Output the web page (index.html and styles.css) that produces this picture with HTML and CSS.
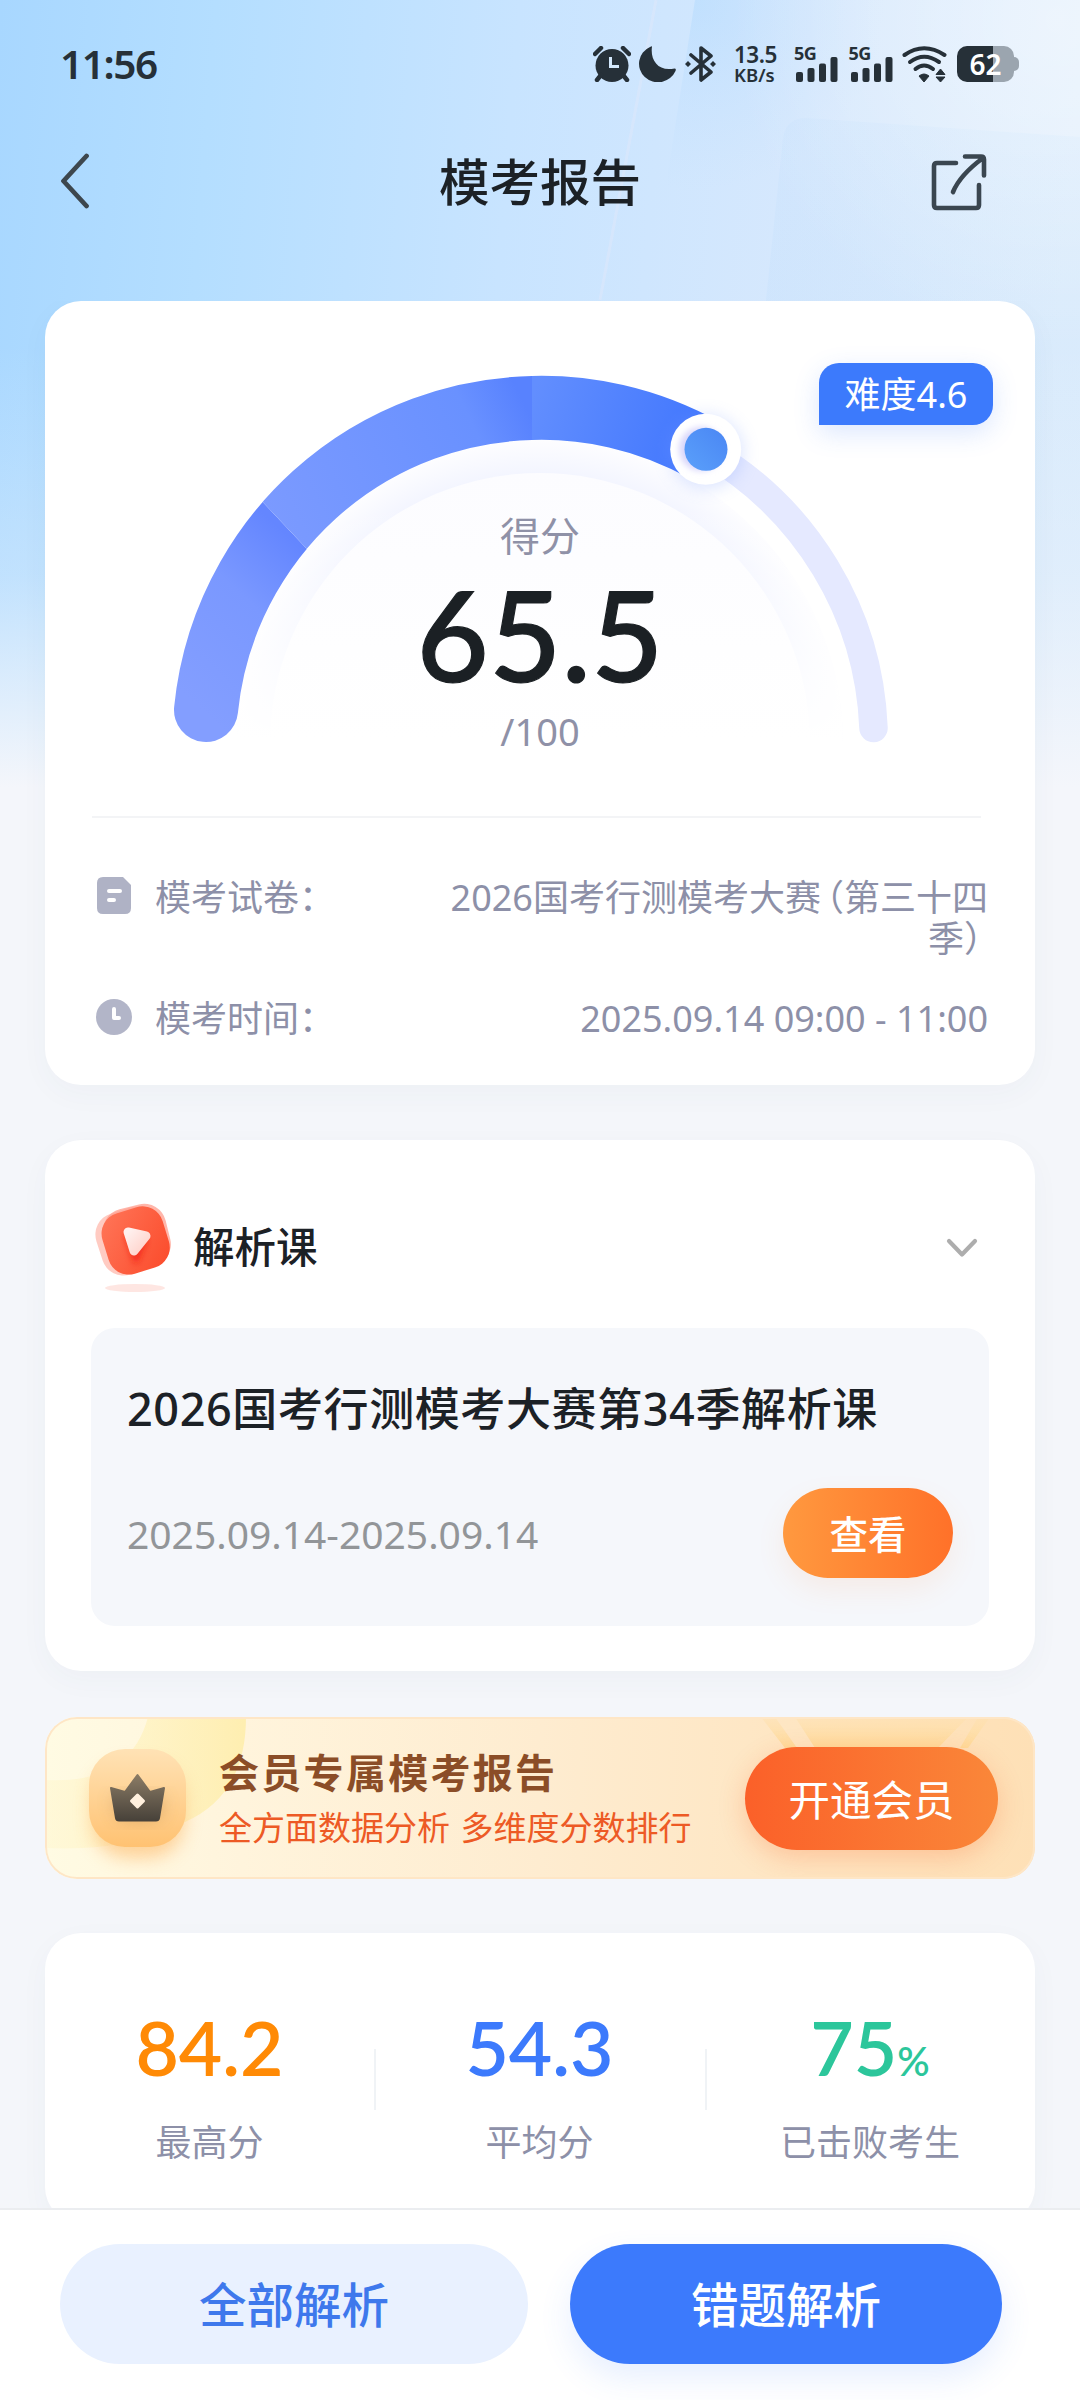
FILE: index.html
```html
<!DOCTYPE html>
<html lang="zh-CN">
<head>
<meta charset="utf-8">
<title>模考报告</title>
<link rel="stylesheet" href="styles.css">
</head>
<body>
<div class="page">
  <svg class="backdrop" viewBox="0 0 1080 820" preserveAspectRatio="none" aria-hidden="true">
    <defs>
      <linearGradient id="sky" x1="0" y1="0" x2="1" y2="0.06">
        <stop offset="0" stop-color="#a8d7ff"/><stop offset=".2" stop-color="#b4deff"/><stop offset=".48" stop-color="#c8e4ff"/><stop offset=".75" stop-color="#d6e8fd"/><stop offset="1" stop-color="#e2effc"/>
      </linearGradient>
      <linearGradient id="fade" x1="0" y1="0" x2="0" y2="1">
        <stop offset=".42" stop-color="#f4f6fb" stop-opacity="0"/><stop offset=".7" stop-color="#f4f6fb" stop-opacity=".3"/><stop offset=".96" stop-color="#f4f6fb"/>
      </linearGradient>
      <linearGradient id="panel" x1="0" y1="0" x2="0" y2="1">
        <stop offset="0" stop-color="#b8dafb" stop-opacity=".25"/><stop offset="1" stop-color="#b4dbfb" stop-opacity=".5"/>
      </linearGradient>
      <radialGradient id="glow" cx="1060" cy="20" r="330" gradientUnits="userSpaceOnUse">
        <stop offset="0" stop-color="#fff" stop-opacity=".4"/><stop offset="1" stop-color="#fff" stop-opacity="0"/>
      </radialGradient>
      <radialGradient id="beam" cx="695" cy="0" r="190" gradientUnits="userSpaceOnUse">
        <stop offset="0" stop-color="#a9d6ff" stop-opacity=".4"/><stop offset="1" stop-color="#b9dcff" stop-opacity="0"/>
      </radialGradient>
    </defs>
    <rect width="1080" height="820" fill="url(#sky)"/>
    <path d="M695 0H900V300H648Z" fill="url(#beam)"/>
    <path d="M656 0L600 300" stroke="#e4e8fb" stroke-opacity=".4" stroke-width="3"/>
    <path d="M766 300L783 138Q786 118 806 118L1080 137V820H766Z" fill="url(#panel)" opacity=".6"/>
    <rect width="1080" height="400" fill="url(#glow)"/>
    <rect width="1080" height="820" fill="url(#fade)"/>
  </svg>

  <header class="status">
    <span class="clock">11:56</span>
    <div class="indicators">
      <svg width="38" height="36" viewBox="0 0 38 36"><circle cx="19" cy="19.500" r="16.500" fill="#263038"/><path d="M2 8L8 2M36 8L30 2M8 29L4 34M30 29L34 34" stroke="#263038" stroke-width="4.500" stroke-linecap="round"/><path d="M17.500 11V20.500H26" fill="none" stroke="#d3e8fc" stroke-width="3"/></svg>
      <svg class="moon" width="37" height="36" viewBox="0 0 37 36"><path d="M13 .5C11 14 19 26 35.500 22.500Q37.500 22.500 36.500 25A19 18.500 0 1 1 11 1Q13 0 13 .5Z" fill="#263038"/></svg>
      <svg class="bt" width="32" height="36" viewBox="0 0 32 36"><path d="M6 9L26 26L16 34V2L26 10L6 27" fill="none" stroke="#263038" stroke-width="3.600" stroke-linejoin="round" stroke-linecap="round"/><path d="M3 15L6 18L3 21L0 18ZM28 15L31 18L28 21L25 18Z" fill="#263038"/></svg>
      <div class="speed"><span>13.5</span><small>KB/s</small></div>
      <div class="signal"><span>5G</span><svg width="42" height="25" viewBox="0 0 42 25" fill="#263038"><rect y="15" width="7" height="10" rx="2"/><rect x="11.500" y="11" width="7" height="14" rx="2"/><rect x="23" y="6.500" width="7" height="18.500" rx="2"/><rect x="34.500" y="0" width="7" height="25" rx="2"/></svg></div>
      <div class="signal"><span>5G</span><svg width="42" height="25" viewBox="0 0 42 25" fill="#263038"><rect y="15" width="7" height="10" rx="2"/><rect x="11.500" y="11" width="7" height="14" rx="2"/><rect x="23" y="6.500" width="7" height="18.500" rx="2"/><rect x="34.500" y="0" width="7" height="25" rx="2"/></svg></div>
      <svg class="wifi" width="45" height="36" viewBox="0 0 45 36"><g fill="none" stroke="#263038" stroke-width="4" stroke-linecap="round"><path d="M2.500 9Q22 -4.500 42.500 9"/><path d="M8 16Q22 5.500 37 16"/><path d="M13.500 23Q22 16 31 23"/></g><path d="M17 30Q22 26 27 30L22 36ZM34 28.500L38.500 23L43 28.500ZM34 31L38.500 36L43 31Z" fill="#263038" stroke="#263038" stroke-linejoin="round"/></svg>
      <div class="battery"><span>62</span></div>
    </div>
  </header>

  <nav class="nav">
    <svg width="30" height="56" viewBox="0 0 30 56"><path d="M26.500 3L3.500 28L26.500 53" fill="none" stroke="#3d474e" stroke-width="4.800" stroke-linecap="round" stroke-linejoin="round"/></svg>
    <h1>模考报告</h1>
    <svg width="56" height="58" viewBox="0 0 56 58"><g fill="none" stroke="#3a4650" stroke-width="4.600" stroke-linecap="round" stroke-linejoin="round"><path d="M25 10H6Q3 10 3 13V52Q3 55 6 55H45Q48 55 48 52V32"/><path d="M34 3.500H50Q53 3.500 53 6.500V22.500M52 5Q29 22 22 39"/></g></svg>
  </nav>

  <main class="content">
    <section class="card score">
      <div class="gauge">
        <svg width="990" height="516" viewBox="45 301 990 516">
          <defs>
            <linearGradient id="seg1" x1="180" y1="690" x2="306" y2="552" gradientUnits="userSpaceOnUse"><stop offset="0" stop-color="#839eff"/><stop offset=".6" stop-color="#7a98ff"/><stop offset="1" stop-color="#6486ff"/></linearGradient>
            <linearGradient id="seg2" x1="280" y1="540" x2="532" y2="420" gradientUnits="userSpaceOnUse"><stop offset="0" stop-color="#7b9aff"/><stop offset=".8" stop-color="#6991ff"/><stop offset="1" stop-color="#5882fe"/></linearGradient>
            <linearGradient id="seg3" x1="532" y1="400" x2="690" y2="450" gradientUnits="userSpaceOnUse"><stop offset="0" stop-color="#628efe"/><stop offset="1" stop-color="#4378fe"/></linearGradient>
            <linearGradient id="knob" x1="0" y1="1" x2="1" y2="0"><stop offset="0" stop-color="#5aa0fa"/><stop offset="1" stop-color="#4a86f4"/></linearGradient>
            <linearGradient id="down" x1="0" y1="470" x2="0" y2="740" gradientUnits="userSpaceOnUse"><stop offset="0" stop-color="#fcfcff"/><stop offset="1" stop-color="#fff"/></linearGradient>
            <radialGradient id="halo" cx="540" cy="743" r="303" gradientUnits="userSpaceOnUse"><stop offset=".885" stop-color="#f3f5ff"/><stop offset="1" stop-color="#fdfdff"/></radialGradient>
            <linearGradient id="veil" x1="0" y1="500" x2="0" y2="740" gradientUnits="userSpaceOnUse"><stop offset="0" stop-color="#fff" stop-opacity="0"/><stop offset="1" stop-color="#fff"/></linearGradient>
            <clipPath id="c1"><path d="M45 301L262.700 502L306 548L540 743H45Z"/></clipPath>
            <clipPath id="c2"><path d="M45 301H532V743H540L306 548L262.700 502Z"/></clipPath>
            <clipPath id="c3"><path d="M532 301H1035V743H532Z"/></clipPath>
            <filter id="soft" x="-50%" y="-50%" width="200%" height="200%"><feGaussianBlur stdDeviation="9"/></filter>
            <filter id="tiny" x="-50%" y="-50%" width="200%" height="200%"><feGaussianBlur stdDeviation="3"/></filter>
          </defs>
          <path d="M237 743A303 303 0 0 1 843 743Z" fill="url(#halo)"/>
          <path d="M237 743A303 303 0 0 1 843 743Z" fill="url(#veil)"/>
          <path d="M270 743A270 270 0 0 1 810 743Z" fill="url(#down)"/>
          <path d="M706 451A335 335 0 0 1 873.500 728" fill="none" stroke="#e5e9ff" stroke-width="28.500" stroke-linecap="round"/>
          <g fill="none" stroke-width="64">
            <path clip-path="url(#c1)" d="M206 710A335 335 0 0 1 340 474" stroke="url(#seg1)" stroke-linecap="round"/>
            <path clip-path="url(#c2)" d="M206 710A335 335 0 0 1 540 408" stroke="url(#seg2)"/>
            <path clip-path="url(#c3)" d="M520 408.500A335 335 0 0 1 706 451" stroke="url(#seg3)"/>
          </g>
          <circle cx="706" cy="452" r="36" fill="#7c9dff" opacity=".3" filter="url(#soft)"/>
          <circle cx="705.700" cy="449.300" r="35.500" fill="#fff"/>
          <circle cx="701" cy="449" r="22" fill="#d8d6fb" filter="url(#tiny)"/>
          <circle cx="706" cy="449.300" r="21.500" fill="url(#knob)"/>
        </svg>
        <div class="readout"><span class="caption">得分</span><strong>65.5</strong><span class="total">/100</span></div>
        <span class="badge">难度4.6</span>
      </div>
      <dl class="info">
        <div class="row">
          <svg width="36" height="38" viewBox="0 0 36 38"><path d="M7 0H27L35 8V31Q35 37 29 37H7Q1 37 1 31V6Q1 0 7 0Z" fill="#afb2c5"/><path d="M13 14H24M13 23H18" stroke="#fff" stroke-width="4" stroke-linecap="round"/></svg>
          <dt>模考试卷：</dt><dd>2026国考行测模考大赛<span class="open">（</span>第三十四季<span class="close">）</span></dd>
        </div>
        <div class="row">
          <svg width="36" height="38" viewBox="0 0 36 38"><circle cx="18" cy="19" r="18" fill="#b2b5c8"/><path d="M18 11V20H23" fill="none" stroke="#fff" stroke-width="4" stroke-linecap="round" stroke-linejoin="round"/></svg>
          <dt>模考时间：</dt><dd>2025.09.14 09:00 - 11:00</dd>
        </div>
      </dl>
    </section>

    <section class="card lesson">
      <div class="lesson-head">
        <svg width="78" height="92" viewBox="94 1202 78 92">
          <defs><linearGradient id="red" x1="0" y1="0" x2="1" y2="1"><stop offset="0" stop-color="#ff7659"/><stop offset="1" stop-color="#fb4a2a"/></linearGradient>
          <linearGradient id="tri" x1="0" y1="0" x2="1" y2="1"><stop offset="0" stop-color="#fff0ee"/><stop offset="1" stop-color="#ffd2ca"/></linearGradient>
          <filter id="b2" x="-50%" y="-50%" width="200%" height="200%"><feGaussianBlur stdDeviation="3"/></filter></defs>
          <ellipse cx="135" cy="1288" rx="30" ry="4" fill="#fdd9d2" opacity=".65"/>
          <rect x="98" y="1209" width="64" height="64" rx="22" fill="#ffb9ae" opacity=".75" transform="rotate(-18 130 1241)"/>
          <rect x="105" y="1206" width="64" height="63" rx="22" fill="#ff9d8d" opacity=".75" transform="rotate(-14 137 1238)"/>
          <rect x="104" y="1209" width="63" height="63" rx="21" fill="url(#red)" transform="rotate(-17 135.500 1240)"/>
          <path d="M128 1236L144 1240L136 1260Z" fill="#f01810" opacity=".65" stroke="#f01810" stroke-width="6" stroke-linejoin="round" filter="url(#b2)"/>
          <path d="M128 1232L146 1236L134 1251Z" fill="url(#tri)" stroke="url(#tri)" stroke-width="9" stroke-linejoin="round"/>
        </svg>
        <h2>解析课</h2>
        <svg class="chevron" width="34" height="22" viewBox="0 0 34 22"><path d="M4 4L17 17.500L30 4" fill="none" stroke="#adadad" stroke-width="4.200" stroke-linecap="round" stroke-linejoin="round"/></svg>
      </div>
      <div class="lesson-box">
        <h3>2026国考行测模考大赛第34季解析课</h3>
        <div class="lesson-foot"><time>2025.09.14-2025.09.14</time><button class="view">查看</button></div>
      </div>
    </section>

    <section class="vip">
      <svg class="vip-art" width="990" height="163" viewBox="45 1717 990 163" aria-hidden="true">
        <defs>
          <linearGradient id="cream" x1="0" y1="0" x2="1" y2="0"><stop offset="0" stop-color="#fffbe3"/><stop offset=".2" stop-color="#fff4dc"/><stop offset=".5" stop-color="#feecd0"/><stop offset="1" stop-color="#fee0b6"/></linearGradient>
          <linearGradient id="moonlit" x1="0" y1="0" x2="1" y2="0"><stop offset="0" stop-color="#fff5c8" stop-opacity=".4"/><stop offset="1" stop-color="#feeeb0"/></linearGradient>
          <linearGradient id="rays" x1="0" y1="0" x2="0" y2="1"><stop offset="0" stop-color="#fee0ae" stop-opacity=".4"/><stop offset="1" stop-color="#ffdb99"/></linearGradient>
          <linearGradient id="tile" x1="0" y1="0" x2="0" y2="1"><stop offset="0" stop-color="#ffe2b5"/><stop offset="1" stop-color="#ffc272"/></linearGradient>
          <linearGradient id="crown" x1="0" y1="0" x2="0" y2="1"><stop offset="0" stop-color="#8a7b65"/><stop offset="1" stop-color="#48423a"/></linearGradient>
          <filter id="b3" x="-50%" y="-50%" width="200%" height="200%"><feGaussianBlur stdDeviation="9"/></filter>
        </defs>
        <rect x="45" y="1717" width="990" height="163" fill="url(#cream)"/>
        <path d="M148 1717H246Q246 1795 185 1822Q130 1852 45 1848V1780Q130 1785 148 1717Z" fill="url(#moonlit)"/>
        <path d="M761 1717H775L797 1748H785ZM795 1717H968L938 1748H815ZM990 1717H978L960 1748H968Z" fill="url(#rays)"/>
        <rect x="92" y="1764" width="92" height="94" rx="36" fill="#fdb868" opacity=".6" filter="url(#b3)"/>
        <rect x="89" y="1749" width="97" height="98" rx="36" fill="url(#tile)"/>
        <path d="M112 1797L121 1819H158L164 1797Z" fill="#a0713a" opacity=".4" filter="url(#b3)"/>
        <path d="M111 1788L125 1792L137.500 1775L150 1792L164 1788L159 1818Q158.500 1820.500 156 1820.500H119Q116.500 1820.500 116 1818Z" fill="url(#crown)" stroke="url(#crown)" stroke-width="2" stroke-linejoin="round"/>
        <path d="M137.500 1795L143.500 1801L137.500 1807L131.500 1801Z" fill="#fff0de" stroke="#fff0de" stroke-width="3" stroke-linejoin="round"/>
      </svg>
      <div class="vip-text"><strong>会员专属模考报告</strong><span>全方面数据分析 多维度分数排行</span></div>
      <button class="join">开通会员</button>
    </section>

    <section class="card stats">
      <div class="stat best"><b>84.2</b><span>最高分</span></div>
      <div class="stat mean"><b>54.3</b><span>平均分</span></div>
      <div class="stat beat"><b>75<small>%</small></b><span>已击败考生</span></div>
    </section>
  </main>

  <footer class="actions">
    <button class="all">全部解析</button>
    <button class="wrong">错题解析</button>
  </footer>
</div>
</body>
</html>
```
FILE: styles.css
```css
* { box-sizing: border-box; margin: 0; padding: 0; }
body { font-family: "Noto Sans", "Noto Sans CJK SC", sans-serif; color: #1c2126; background: #f4f6fa; }
svg { display: block; flex: none; }
button { border: 0; font-family: inherit; color: #fff; white-space: nowrap; }
.page { position: relative; width: 1080px; height: 2400px; overflow: hidden; display: flex; flex-direction: column; }
.backdrop { position: absolute; left: 0; top: 0; width: 1080px; height: 820px; }

.status { position: relative; height: 120px; padding: 43px 60px 0 60px; display: flex; justify-content: space-between; align-items: flex-start; color: #263038; }
.clock { font-size: 40.5px; font-weight: 600; line-height: 42px; letter-spacing: -1.4px; }
.indicators { display: flex; align-items: flex-start; height: 36px; margin-top: 3px; }
.moon { margin-left: 8px; }
.bt { margin-left: 9px; }
.speed { width: 60px; padding-left: 17px; display: flex; flex-direction: column; font-weight: 600; }
.speed span { font-size: 22.5px; line-height: 18px; letter-spacing: -.5px; }
.speed small { font-size: 18.5px; line-height: 18px; margin-top: 2px; }
.signal { width: 54.5px; display: grid; }
.signal > * { grid-area: 1 / 1; }
.signal span { font-size: 18px; font-weight: 700; line-height: 15px; letter-spacing: -.5px; }
.signal svg { margin: 11px 0 0 2px; }
.speed + .signal { margin-left: 17px; }
.wifi { margin-left: -1px; }
.battery { width: 57px; height: 36px; margin: 0 6px 0 10px; border-radius: 10px; background: linear-gradient(90deg, #263038 36px, #9ba5af 36px); display: flex; justify-content: center; position: relative; }
.battery::after { content: ""; position: absolute; right: -5px; top: 11px; width: 6px; height: 14px; border-radius: 0 5px 5px 0; background: #9ba5af; }
.battery span { font-size: 28px; font-weight: 600; line-height: 36px; color: #fff; }

.nav { position: relative; height: 181px; padding: 32px 93px 0 60px; display: flex; align-items: flex-start; }
.nav > svg { margin-top: 1px; }
.nav h1 { flex: 1; padding-left: 59px; text-align: center; font-size: 50.5px; font-weight: 500; line-height: 60px; }

.content { position: relative; flex: none; height: 1907px; padding: 0 45px; overflow: hidden; }
.card { background: #fff; border-radius: 36px; box-shadow: 0 9px 30px rgba(60, 80, 110, .035); }

.score { height: 784px; }
.gauge { display: grid; position: relative; border-bottom: 2px solid transparent; }
.gauge > svg, .readout { grid-area: 1 / 1; }
.gauge::after { content: ""; position: absolute; left: 47px; right: 54px; bottom: -1px; height: 2px; background: #f3f4f6; }
.readout { position: relative; display: flex; flex-direction: column; align-items: center; padding-top: 210px; color: #8f91a7; }
.caption { font-size: 40px; line-height: 50px; }
.readout strong { font-family: Lato, "Noto Sans", sans-serif; font-size: 125px; font-weight: 500; line-height: 122px; margin-top: 12px; color: #1b2024; -webkit-text-stroke: 1.2px #1b2024; }
.total { font-size: 38px; line-height: 44px; margin-top: 14px; }
.badge { position: absolute; left: 774px; top: 62px; width: 174px; height: 62px; line-height: 64px; text-align: center; font-size: 36px; color: #fff; background: #3c7afc; border-radius: 20px 20px 20px 0; box-shadow: 0 8px 26px rgba(60, 122, 252, .18); }
.info { padding: 58px 47px 0 51px; display: flex; flex-direction: column; gap: 39px; font-size: 36px; line-height: 41px; color: #8d90a8; }
.row { display: flex; align-items: flex-start; }
.row dt { margin-left: 23px; white-space: nowrap; }
.row dd { margin-left: auto; width: 560px; text-align: right; }
.open, .close { font-feature-settings: "halt"; }
.open { margin-left: 5px; }
.close { margin-right: 6px; }

.lesson { margin-top: 55px; height: 531px; padding: 62px 46px 0; }
.lesson-head { display: flex; height: 92px; padding-left: 3px; }
.lesson-head h2 { margin: 18px 0 0 21px; font-size: 41.5px; line-height: 54px; font-weight: 500; }
.chevron { margin: 35px 10px 0 auto; }
.lesson-box { margin-top: 34px; height: 298px; padding: 51px 36px 0; border-radius: 24px; background: #f5f7fb; }
.lesson-box h3 { font-size: 45px; line-height: 60px; font-weight: 500; letter-spacing: .6px; white-space: nowrap; }
.lesson-foot { margin-top: 49px; display: flex; justify-content: space-between; align-items: center; }
.lesson-foot time { font-size: 39px; color: #929598; }
.view { width: 170px; height: 90px; padding-bottom: 3px; border-radius: 45px; font-size: 38.5px; font-weight: 500; background: linear-gradient(90deg, #ff993f, #ff7129); box-shadow: 0 12px 28px rgba(255, 140, 60, .1); }

.vip { position: relative; margin-top: 46px; height: 162px; border-radius: 32px; overflow: hidden; display: flex; padding: 30px 37px 0 174px; justify-content: space-between; }
.vip::after { content: ""; position: absolute; inset: 0; border: 2px solid #fee6c6; border-radius: 32px; }
.vip-art { position: absolute; left: 0; top: 0; }
.vip-text { position: relative; display: flex; flex-direction: column; white-space: nowrap; }
.vip-text strong { font-size: 40px; letter-spacing: 2.3px; line-height: 52px; font-weight: 600; color: #8b4d27; }
.vip-text span { font-size: 33px; line-height: 44px; margin-top: 7px; word-spacing: 2px; color: #ed5a25; }
.join { position: relative; width: 253px; height: 103px; padding-bottom: 2px; border-radius: 52px; font-size: 41.5px; background: linear-gradient(90deg, #fb6029, #fa8739); box-shadow: 0 8px 26px rgba(251, 100, 40, .25); }

.stats { margin-top: 54px; height: 290px; display: grid; grid-template-columns: 329px 331px 330px; }
.stat { position: relative; text-align: center; padding-top: 66px; }
.stat + .stat::before { content: ""; position: absolute; left: 0; top: 116px; width: 2px; height: 61px; background: #f0f3f6; }
.stat b { display: block; height: 96px; font-family: Lato, "Noto Sans", sans-serif; font-size: 75px; line-height: 96px; font-weight: 600; }
.stat small { font-size: 40px; line-height: 40px; font-weight: 600; }
.stat span { display: block; font-size: 36px; line-height: 46px; margin-top: 25px; color: #8d90a8; }
.best b { color: #ff8a05; }
.mean b { color: #3c7afc; }
.beat b { color: #2cc69b; }

.actions { position: relative; height: 192px; padding: 34px 60px 0; border-top: 2px solid #ebedf0; background: #fff; display: flex; gap: 42px; }
.actions button { height: 120px; padding-bottom: 3px; border-radius: 60px; font-size: 47.5px; font-weight: 500; }
.all { width: 468px; background: #e9f1ff; }
.actions .all { color: #3e78ec; }
.wrong { width: 432px; background: #3c7afc; box-shadow: 0 14px 32px rgba(60, 122, 252, .12); }
```
